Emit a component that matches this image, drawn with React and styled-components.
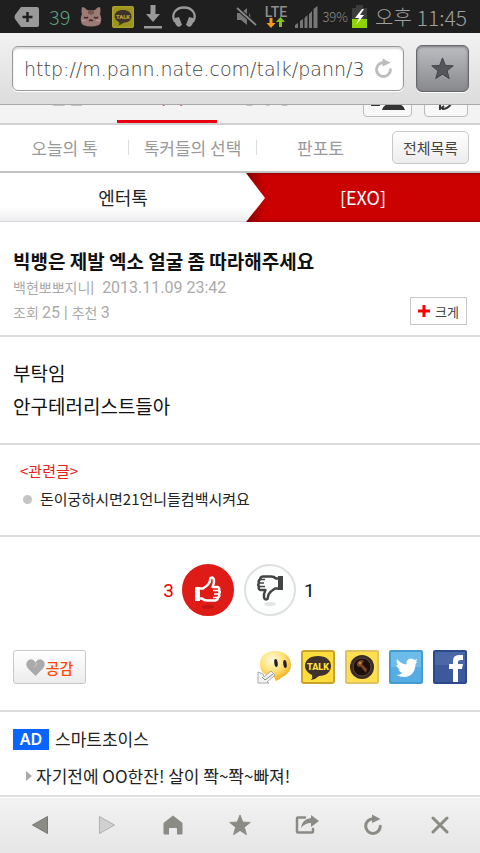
import { useState } from "react"
import styled, { createGlobalStyle, css } from "styled-components"

const kr = `"Noto Sans CJK KR", "Noto Sans", sans-serif`
const thin = `"DejaVu Sans Light", "DejaVu Sans", "Noto Sans CJK KR", sans-serif`

const Global = createGlobalStyle`
    * { box-sizing: border-box; }
    body { margin: 0; background: #fff; color: #222; font-family: ${kr}; }
    button, input { font-family: inherit; margin: 0; }
    button { padding: 0; cursor: pointer; color: inherit; }
    a { color: inherit; text-decoration: none; }
    h1, h2, p, ul { margin: 0; padding: 0; font-weight: 400; }
    ul { list-style: none; }
    svg { display: block; flex: none; }
`

let Page = styled.div`
    display: flex;
    flex-direction: column;
    min-height: 100vh;
`

// phone status bar
let Status = styled.div`
    display: flex;
    align-items: center;
    justify-content: space-between;
    height: 33px;
    padding: 0 13px 0 14px;
    background: #1f1f1f;
    color: #8e8e8e;
`
let StatusSide = styled.div`
    display: flex;
    align-items: center;
    gap: ${p => p.$gap}px;
`
let StatusText = styled.span`
    font-size: ${p => p.$size}px;
    font-weight: 300;
    line-height: 32px;
    white-space: nowrap;
    color: ${p => p.$color || 'inherit'};
`
let Clock = styled.div`
    display: flex;
    align-items: center;
    gap: 5px;
    margin-left: 4px;
    color: #a0a0a0;
`

// address bar
let Toolbar = styled.header`
    display: flex;
    align-items: center;
    gap: 12px;
    height: 72px;
    padding: 0 11px 0 12px;
    border-bottom: 1px solid #a9a9ab;
    background: linear-gradient(#f2f2f2, #dcdcdc);
`
let Address = styled.label`
    display: flex;
    align-items: center;
    flex: 1;
    min-width: 0;
    height: 45px;
    padding: 0 9px 0 11px;
    gap: 4px;
    border: 1px solid #98989c;
    border-radius: 6px;
    background: #fff;
    box-shadow: inset 0 2px 2px #d8d8dc, 0 1px 0 #fff;
`
let UrlInput = styled.input`
    flex: 1;
    min-width: 0;
    padding: 0;
    border: 0;
    outline: 0;
    background: none;
    color: #444;
    font-family: ${thin};
    font-size: 19px;
    font-weight: 200;
`
let IconButton = styled.button`
    display: flex;
    align-items: center;
    justify-content: center;
    border: 0;
    background: none;
`
let StarButton = styled(IconButton)`
    width: 53px;
    height: 47px;
    border: 1px solid #66676b;
    border-radius: 6px;
    background: linear-gradient(#bcbdc1, #88898d);
    box-shadow: inset 0 1px 3px #77787c, 0 1px 0 #fff;
`

// main tabs, scrolled half under the address bar
let MainTabs = styled.nav`
    display: flex;
    align-items: flex-end;
    height: 20px;
    padding-left: 17px;
    padding-right: 12px;
    overflow: hidden;
    border-bottom: 2px solid #d0d0d0;
    background: #f3f3f3;
`
let MainTab = styled.a`
    flex: none;
    width: 100px;
    padding-bottom: 12px;
    border-bottom: 3px solid ${p => p.$on ? '#e60012' : 'transparent'};
    color: ${p => p.$on ? '#e60012' : '#333'};
    text-align: center;
    font-size: 19px;
    line-height: 24px;
`
let TabTools = styled.div`
    display: flex;
    gap: 12px;
    margin-left: auto;
    padding-bottom: 6px;
`
let ToolButton = styled(IconButton)`
    align-items: flex-end;
    width: ${p => p.$w}px;
    height: 34px;
    padding-bottom: 6px;
    border: 1px solid #bbb;
    border-radius: 4px;
    background: #f8f8f8;
`

let SubNav = styled.nav`
    display: flex;
    align-items: center;
    height: 48px;
    padding-right: 11px;
    padding-bottom: 2px;
    border-bottom: 2px solid #c4c4c4;
    color: #999;
`
let SubLink = styled.a`
    flex: 1;
    border-left: 1px solid ${p => p.$first ? 'transparent' : '#ddd'};
    text-align: center;
    font-size: 17px;
    line-height: 15px;
    white-space: nowrap;
`
let SoftButton = styled.button`
    display: flex;
    align-items: center;
    justify-content: center;
    gap: 1px;
    width: ${p => p.$w}px;
    height: ${p => p.$h}px;
    border: 1px solid #c8c8c8;
    border-radius: ${p => p.$r || 0}px;
    background: ${p => p.$flat ? '#fff' : 'linear-gradient(#fff, #ececec)'};
    color: ${p => p.$color || '#444'};
    font-size: ${p => p.$size}px;
    font-weight: ${p => p.$bold ? 500 : 400};
`
let ListButton = styled(SoftButton)`
    margin-left: 8px;
`

let Crumbs = styled.nav`
    display: grid;
    grid-template-columns: 41fr 39fr;
    height: 49px;
    border-bottom: 1px solid #d8d8e0;
    text-align: center;
    font-size: 18px;
    line-height: 48px;
`
let Crumb = styled.a`
    position: relative;
    background: linear-gradient(#fff 70%, #eee);
    ${p => p.$on && css`
        margin-bottom: -1px;
        background: linear-gradient(#a00000, #cb0000 3px, #cb0000 46px, #a80000);
        color: #fff;
    `}
`
let Arrow = styled.svg`
    position: absolute;
    left: 0;
    top: 0;
`

let Section = styled.section`
    padding: ${p => p.$pad};
    border-bottom: 2px solid #dcdcdc;
`
let Title = styled.h1`
    color: #111;
    font-size: 19px;
    font-weight: 700;
    line-height: 28px;
`
let MetaRow = styled.div`
    display: flex;
    justify-content: space-between;
    align-items: flex-end;
`
let Meta = styled.p`
    color: #aaa;
    font-size: 14px;
    line-height: 25px;
    white-space: pre;
`
let Num = styled.span`
    font-family: Roboto, sans-serif;
    font-size: 16px;
`
let Body = styled.p`
    color: #111;
    font-size: 19px;
    line-height: 33px;
`
let RelatedTitle = styled.h2`
    color: #e3211c;
    font-size: 15px;
    line-height: 28px;
`
let RelatedList = styled.ul`
    padding-left: 3px;
`
let Item = styled.li`
    display: flex;
    align-items: center;
    gap: ${p => p.$gap}px;
    color: #222;
    font-size: ${p => p.$size}px;
    line-height: 28px;
    white-space: nowrap;
`
let Dot = styled.span`
    width: 9px;
    height: 9px;
    border-radius: 50%;
    background: #c4c4c4;
`

let Votes = styled.div`
    display: flex;
    align-items: center;
    justify-content: center;
    gap: ${p => p.$gap}px;
`
let VoteArea = styled(Votes)`
    padding: 27px 2px 34px 0;
`
let Count = styled.span`
    min-width: 10px;
    color: ${p => p.$color};
    font-family: Roboto, sans-serif;
    font-size: 19px;
`
let Vote = styled(IconButton)`
    width: 52px;
    height: 52px;
    border: 2px solid ${p => p.$up ? '#de1b16' : '#dfe1e1'};
    border-radius: 50%;
    background: ${p => p.$up ? '#de1b16' : '#fdfefe'};
`
let ShareRow = styled.div`
    display: flex;
    align-items: center;
    justify-content: space-between;
    padding: 0 13px 26px;
    border-bottom: 2px solid #dcdcdc;
`
let Shares = styled.div`
    display: flex;
    gap: 10px;
`

let AdHead = styled.h2`
    display: flex;
    align-items: center;
    gap: 6px;
    font-size: 17px;
    line-height: 36px;
`
let AdTag = styled.span`
    width: 36px;
    background: #0a64ff;
    color: #fff;
    text-align: center;
    font-family: "Noto Sans", sans-serif;
    font-size: 16px;
    font-weight: 600;
    line-height: 21px;
`
let Ads = styled.section`
    padding: 9px 13px 0;
`
let AdList = styled.ul`
    padding: 5px 0 4px 13px;
`

let BottomBar = styled.footer`
    display: grid;
    grid-template-columns: repeat(7, 1fr);
    height: 58px;
    margin-top: auto;
    padding: 0 7px;
    border-top: 2px solid #e0e0e0;
    background: linear-gradient(#f2f2f2, #e6e6e6);
    box-shadow: inset 0 1px 0 #fff;
`

function Star({ size, fill, stroke }) {
    return (
        <svg width={size} height={size} viewBox="0 0 24 24">
            <path d="M12 1l3 7.800 8.200.4-6.400 5.200 2.200 8.100-7-4.600-7 4.600 2.200-8.100L.8 9.200 9 8.800z" fill={fill} stroke={stroke} strokeWidth="1" />
        </svg>
    )
}

function Reload({ size, color }) {
    return (
        <svg width={size} height={size} viewBox="0 0 22 22">
            <path d="M11.500 4.800H11a7.300 7.300 0 1 0 7.300 7.500" fill="none" stroke={color} strokeWidth="3" strokeLinecap="round" />
            <path d="M10 .5l8.500 4.500-8.500 4z" fill={color} />
        </svg>
    )
}

function StatusIcons() {
    return (
        <StatusSide $gap={10}>
            <svg width="25" height="20" viewBox="0 0 25 20">
                <path d="M7 0h16q2 0 2 2v16q0 2-2 2H7L1 12q-1-2 0-4z" fill="#999" />
                <path d="M13.500 5v10M8.500 10h10" stroke="#1f1f1f" strokeWidth="2.500" />
            </svg>
            <StatusText $size={20} $color="#5fa080">39</StatusText>
            <svg width="22" height="21" viewBox="0 0 22 21">
                <path d="M2 1q3 0 5 3h8q2-3 5-3 1 4 0 7 3 7-1 11-8 3-16 0-4-4-1-11-1-3 0-7z" fill="#9c7a75" />
                <path d="M9 4v4M11 4v5M13 4v4" stroke="#5a3432" strokeWidth="1" />
                <path d="M4 11q2 2 4 0M14 11q2 2 4 0M9 15q2-2 4 0" fill="none" stroke="#412624" strokeWidth="1.300" />
                <path d="M2 15l4-1M20 15l-4-1" stroke="#c5a09b" />
            </svg>
            <TalkIcon size={22} bg="#9b941f" edge="#aaa22b" text="#b0a72c" />
            <svg width="18" height="24" viewBox="0 0 18 24">
                <path d="M6.500 0h5v9H16l-7 8-7-8h4.500z" fill="#999" />
                <path d="M0 21h18v2.500H0z" fill="#999" />
            </svg>
            <svg width="24" height="21" viewBox="0 0 24 21">
                <path d="M3 16C-2 7 5 1.500 12 1.500S26 7 21 16" fill="none" stroke="#999" strokeWidth="2.300" />
                <path d="M3 12l4-1 3 8-3 2q-5-1-4-9zM21 12l-4-1-3 8 3 2q5-1 4-9z" fill="#999" />
            </svg>
        </StatusSide>
    )
}

function Signal() {
    return (
        <StatusSide $gap={4}>
            <svg width="21" height="20" viewBox="0 0 21 20">
                <path d="M1 6h4l6-5v17l-6-5H1zM13 6q3 4 0 8" fill="#777" />
                <path d="M1 1l19 17" stroke="#1f1f1f" strokeWidth="4" />
                <path d="M1 1l19 17" stroke="#888" strokeWidth="1.800" />
            </svg>
            <svg width="30" height="24" viewBox="0 0 30 24">
                <text x="15" y="12" textAnchor="middle" fontFamily="Roboto" fontWeight="500" fontSize="14" fill="#8e8e8e">LTE</text>
                <path d="M9.500 13v5h3L8 23l-4.500-5h3v-5z" fill="#f39a22" transform="translate(2 0)" />
                <path d="M18 22v-5h-3l4.500-5 4.500 5h-3v5z" fill="#84c41c" />
            </svg>
            <svg width="23" height="22" viewBox="0 0 23 22">
                <path d="M0 22v-3l3-2v5zM5 22v-7l3-2v9zM9.500 22V12l3-3v13zM14 22V8l3-3v17zM18.500 22V3l4-3v22z" fill="#777" />
            </svg>
            <StatusText $size={13}>39%</StatusText>
            <svg width="15" height="23" viewBox="0 0 15 23">
                <path d="M4 0h7v3h4v11H0V3h4z" fill="#3c3c3c" />
                <path d="M0 14h15v9H0z" fill="#8fd400" />
                <path d="M10 4l-7 9h4l-3 7 8-10H8l4-6z" fill="#fff" />
            </svg>
            <Clock>
                <StatusText $size={20}>오후</StatusText>
                <StatusText $size={21}>11:45</StatusText>
            </Clock>
        </StatusSide>
    )
}

function TalkIcon({ size, bg, edge, text }) {
    return (
        <svg width={size} height={size} viewBox="0 0 34 34">
            <rect x="1" y="1" width="32" height="32" rx="2" fill={bg} stroke={edge} strokeWidth="2" />
            <path d="M17 6c8 0 13 4 13 10s-5 10-12 10q-3 3-8 4 2-2 1-5C7 23 4 20 4 16 4 10 9 6 17 6z" fill="#40322c" />
            <text x="17" y="20" textAnchor="middle" fontFamily="Roboto" fontWeight="900" fontSize="9" fill={text}>TALK</text>
        </svg>
    )
}

function Thumb({ down }) {
    let color = down ? '#444' : '#fff'
    return (
        <svg width="48" height="48" viewBox="0 0 48 48">
            <ellipse cx="24" cy={down ? 38 : 41} rx="6" ry="2" fill={down ? '#e4e4e4' : '#bd1712'} />
            <g transform={down ? 'rotate(180 24 22.500)' : undefined}>
                <path d="M14 22.500h5q5-3 6.500-6l1-4.500q3-1.500 3.500 2 .5 3-1.500 7h5q2.500.5 1.500 3.500 1.500 1.500 0 3.500 1 2-1 3.500 0 2.500-3 3H23q-3 0-5-2h-4z" fill={down ? '#fdfefe' : '#de1b16'} stroke={color} strokeWidth="2.500" strokeLinejoin="round" />
                <path d="M11 21h5v14h-5z" fill={color} />
                <path d="M29 24.500h5M30 28h4M29 31.500h4" stroke={color} strokeWidth="1.500" />
            </g>
        </svg>
    )
}

function ShareIcons() {
    return (
        <Shares>
            <IconButton aria-label="네이트온">
                <svg width="34" height="34" viewBox="0 0 34 34">
                    <defs>
                        <radialGradient id="face" cx=".4" cy=".3" r=".75">
                            <stop offset="0" stopColor="#fffbe0" />
                            <stop offset=".5" stopColor="#ffe27a" />
                            <stop offset="1" stopColor="#f0a60c" />
                        </radialGradient>
                    </defs>
                    <path d="M18 1c10 0 16 6 16 14 0 7-5 10-10 13l-5 3-2-4C8 26 3 22 3 14 3 6 9 1 18 1z" fill="url(#face)" />
                    <ellipse cx="19" cy="13" rx="1.700" ry="4" fill="#222" transform="rotate(-8 19 13)" />
                    <ellipse cx="28" cy="14" rx="1.700" ry="4" fill="#222" transform="rotate(-8 28 14)" />
                    <path d="M1 22l5 2 1 3 7-6 4 4-8 7 2 1H1z" fill="#f4f4f4" stroke="#aaa" />
                    <path d="M5 27l3 3 8-6" fill="none" stroke="#888" />
                </svg>
            </IconButton>
            <IconButton aria-label="카카오톡">
                <TalkIcon size={34} bg="#fddc3c" edge="#c9a32b" text="#ffe23c" />
            </IconButton>
            <IconButton aria-label="카카오스토리">
                <svg width="34" height="34" viewBox="0 0 34 34">
                    <rect x="1" y="1" width="32" height="32" rx="1" fill="#fddf50" stroke="#e3c263" strokeWidth="2" />
                    <circle cx="17" cy="17" r="12" fill="#3b2b25" />
                    <circle cx="17" cy="17" r="9" fill="#1b100c" stroke="#5a4a42" />
                    <path d="M12 13q3-5 7-2l-2 3 5 5-1 4-5-6q-5 0-4-4z" fill="#7a4420" />
                    <circle cx="15" cy="13" r="1.500" fill="#c5834a" />
                </svg>
            </IconButton>
            <IconButton aria-label="트위터">
                <svg width="34" height="34" viewBox="0 0 34 34">
                    <rect x="1" y="1" width="32" height="32" rx="1" fill="#55ade3" stroke="#469bd1" strokeWidth="2" />
                    <path d="M2 2h30v15H2z" fill="#6bbcea" />
                    <path d="M8 9q4 5 9.500 5.500Q17 9 22 8.500q2.500 0 3.500 1.500l3-1-2 3 2-.5-2 2.500c0 8-5 13-11 13q-5 0-8-2 4 0 6-2-3-.5-4-3.500h2q-4-1.500-4-5l2 .5q-3-3-1.500-6z" fill="#fff" />
                </svg>
            </IconButton>
            <IconButton aria-label="페이스북">
                <svg width="34" height="34" viewBox="0 0 34 34">
                    <rect x="1" y="1" width="32" height="32" rx="1" fill="#3c5a9b" stroke="#2c4a8b" strokeWidth="2" />
                    <path d="M2 2h30v13H2z" fill="#4b68a6" />
                    <path d="M20 32V19h-4v-5h4v-3q0-6 6-6h4v5h-2.500q-2.500 0-2.500 2v2h5l-1 5h-4v13z" fill="#fff" />
                </svg>
            </IconButton>
        </Shares>
    )
}

function BottomIcons() {
    let c = '#8b8b86'
    return (
        <BottomBar>
            <IconButton aria-label="뒤로">
                <svg width="18" height="20" viewBox="0 0 18 20"><path d="M16.500 1.500v17L1.500 10z" fill={c} stroke="#777772" strokeLinejoin="round" /></svg>
            </IconButton>
            <IconButton aria-label="앞으로">
                <svg width="18" height="20" viewBox="0 0 18 20"><path d="M1.500 1.500v17l15-8.500z" fill="#d0d0d0" stroke="#b0b0b0" strokeLinejoin="round" /></svg>
            </IconButton>
            <IconButton aria-label="홈">
                <svg width="20" height="20" viewBox="0 0 20 20"><path d="M10 .5L19.500 8v10.500q0 1-1 1H14V14q0-1-1-1H7q-1 0-1 1v5.500H1.500q-1 0-1-1V8z" fill={c} /></svg>
            </IconButton>
            <IconButton aria-label="즐겨찾기"><Star size={22} fill={c} stroke={c} /></IconButton>
            <IconButton aria-label="공유">
                <svg width="24" height="20" viewBox="0 0 24 20">
                    <path d="M10 2.500H3q-1 0-1 1v13q0 1 1 1h14q1 0 1-1V14" fill="none" stroke={c} strokeWidth="2.500" strokeLinecap="round" />
                    <path d="M6 13q1-9 10-10V0l8 6-8 6V8q-6 0-10 5z" fill={c} />
                </svg>
            </IconButton>
            <IconButton aria-label="새로고침"><Reload size={22} color={c} /></IconButton>
            <IconButton aria-label="닫기">
                <svg width="18" height="18" viewBox="0 0 18 18"><path d="M2 2l14 14M16 2L2 16" stroke={c} strokeWidth="3" strokeLinecap="round" /></svg>
            </IconButton>
        </BottomBar>
    )
}

export default function App() {
    let [url, setUrl] = useState('http://m.pann.nate.com/talk/pann/3')
    return (
        <Page>
            <Global />
            <Status>
                <StatusIcons />
                <Signal />
            </Status>

            <Toolbar>
                <Address>
                    <UrlInput aria-label="주소" value={url} onChange={e => setUrl(e.target.value)} />
                    <Reload size={21} color="#bcbcbc" />
                </Address>
                <StarButton aria-label="즐겨찾기 추가"><Star size={23} fill="#55565b" stroke="#404146" /></StarButton>
            </Toolbar>

            <MainTabs>
                <MainTab href="#">칼럼</MainTab>
                <MainTab href="#" $on>이미</MainTab>
                <MainTab href="#">동영상</MainTab>
                <TabTools>
                    <ToolButton $w={49} aria-label="내 정보">
                        <svg width="34" height="16" viewBox="0 0 34 16">
                            <path d="M0 9h9v3H0zM11 16q1-5 7-6V3h9v7q6 1 7 6z" fill="#333" />
                        </svg>
                    </ToolButton>
                    <ToolButton $w={44} aria-label="글쓰기">
                        <svg width="18" height="16" viewBox="0 0 18 16">
                            <path d="M3 7v8l4-3M5 15q7 0 10-7" fill="none" stroke="#333" strokeWidth="2" />
                        </svg>
                    </ToolButton>
                </TabTools>
            </MainTabs>

            <SubNav>
                <SubLink href="#" $first>오늘의 톡</SubLink>
                <SubLink href="#">톡커들의 선택</SubLink>
                <SubLink href="#">판포토</SubLink>
                <ListButton $w={77} $h={33} $r={5} $size={15}>전체목록</ListButton>
            </SubNav>

            <Crumbs>
                <Crumb href="#">엔터톡</Crumb>
                <Crumb href="#" $on>
                    <Arrow width="32" height="49" viewBox="0 0 32 49">
                        <defs>
                            <linearGradient id="shade">
                                <stop offset="0" stopColor="#700" />
                                <stop offset="1" stopColor="#cb0000" stopOpacity="0" />
                            </linearGradient>
                            <linearGradient id="tip" x2="0" y2="1">
                                <stop offset=".7" stopColor="#fff" />
                                <stop offset="1" stopColor="#eee" />
                            </linearGradient>
                        </defs>
                        <path d="M0 0h12l14 25-14 24H0z" fill="url(#shade)" />
                        <path d="M0 0l19 25L0 49z" fill="url(#tip)" />
                    </Arrow>
                    [EXO]
                </Crumb>
            </Crumbs>

            <Section $pad="25px 13px 10px">
                <Title>빅뱅은 제발 엑소 얼굴 좀 따라해주세요</Title>
                <MetaRow>
                    <div>
                        <Meta>백현뽀뽀지니<Num>|  2013.11.09 23:42</Num></Meta>
                        <Meta>조회 <Num>25 | </Num>추천 <Num>3</Num></Meta>
                    </div>
                    <SoftButton $w={57} $h={28} $size={13} $flat>
                        <svg width="16" height="12" viewBox="0 0 16 12"><path d="M6 0v12M0 6h12" stroke="#f00" strokeWidth="3" /></svg>
                        크게
                    </SoftButton>
                </MetaRow>
            </Section>

            <Section $pad="19px 13px 21px">
                <Body>부탁임<br />안구테러리스트들아</Body>
            </Section>

            <Section $pad="12px 20px 22px">
                <RelatedTitle>&lt;관련글&gt;</RelatedTitle>
                <RelatedList>
                    <Item $gap={8} $size={15}><Dot /><a href="#">돈이궁하시면21언니들컴백시켜요</a></Item>
                </RelatedList>
            </Section>

            <VoteArea $gap={8}>
                <Count $color="#e00">3</Count>
                <Votes $gap={10}>
                    <Vote $up aria-label="추천"><Thumb /></Vote>
                    <Vote aria-label="반대"><Thumb down /></Vote>
                </Votes>
                <Count $color="#111">1</Count>
            </VoteArea>

            <ShareRow>
                <SoftButton $w={73} $h={34} $r={3} $size={15} $color="#ff4a0a" $bold>
                    <svg width="19" height="17" viewBox="0 0 19 17">
                        <path d="M9.500 17L2 9.500Q-1.500 5 2 1.500 6-1.500 9.500 3 13-1.500 17 1.500q3.500 3.500 0 8z" fill="#aaa" />
                        <path d="M9 3l2 2-3 3" fill="none" stroke="#ccc" strokeWidth="1" />
                    </svg>
                    공감
                </SoftButton>
                <ShareIcons />
            </ShareRow>

            <Ads>
                <AdHead><AdTag>AD</AdTag>스마트초이스</AdHead>
                <AdList>
                    <Item $gap={4} $size={17}>
                        <svg width="6" height="10" viewBox="0 0 6 10"><path d="M0 0l6 5-6 5z" fill="#aaa" /></svg>
                        <a href="#">자기전에 OO한잔! 살이 쫙~쫙~빠져!</a>
                    </Item>
                </AdList>
            </Ads>

            <BottomIcons />
        </Page>
    )
}
